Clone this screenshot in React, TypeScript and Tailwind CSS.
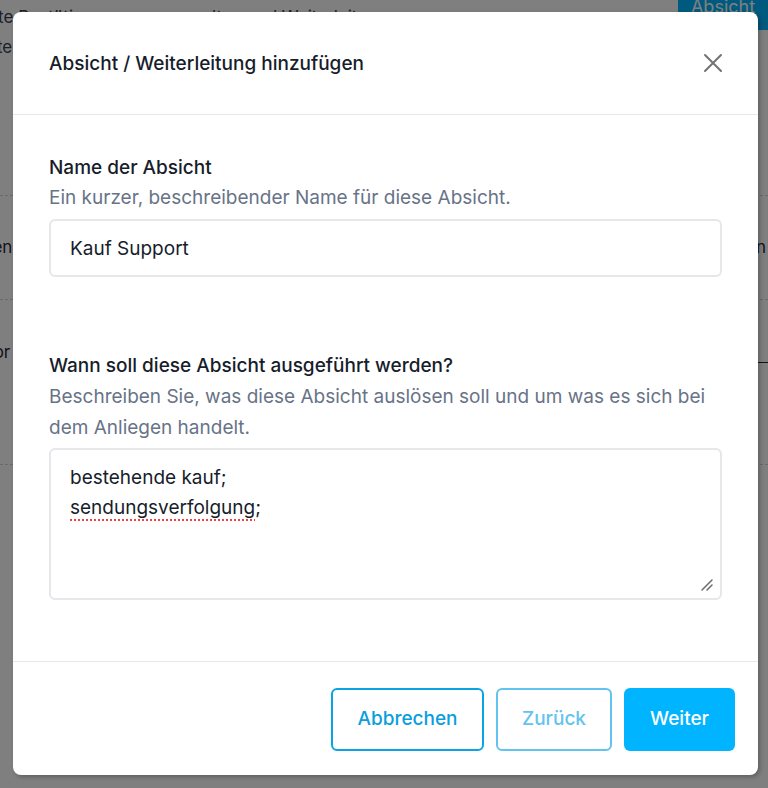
const font = { fontFamily: '"Inter", "Liberation Sans", sans-serif' };

function BackgroundPage() {
  return (
    <div className="h-full bg-white text-[17px] text-[#1f2937]">
      <div className="flex items-start justify-between">
        <div className="ml-[-12px] pt-[2px] leading-[30px] text-[#374151]">
          <p>ute Bestätigungen zu verwalten und Weiterleitungen</p>
          <p>ste</p>
        </div>
        <div className="flex h-[30px] w-[90px] items-end justify-center rounded-bl-md bg-[#00b4ff] pb-[14px] text-[18px] leading-none text-white">Absicht</div>
      </div>
      <div className="mt-[133px]">
        <div className="flex h-[105px] items-center justify-between border-y border-dashed border-gray-300 bg-white">
          <span className="ml-[-32px]">Offen</span>
          <span className="mr-[2px]">Offen</span>
        </div>
        <div className="flex h-[165px] items-start justify-between border-b border-dashed border-gray-300 pt-[40px]">
          <span className="ml-[-16px]">Tor</span>
          <span className="mr-[-14px] mt-[22px] h-px w-[24px] bg-gray-800" />
        </div>
      </div>
    </div>
  );
}

export default function App() {
  return (
    <div className="relative h-[788px] w-[768px] overflow-hidden" style={font}>
      <BackgroundPage />
      <div className="absolute inset-0 bg-black/50 pl-[13px] pt-[12px]">
        <div className="flex h-[763px] w-[745px] flex-col rounded-lg bg-white shadow-[2px_2px_4px_rgba(0,0,0,0.25)]">
          <div className="flex h-[103px] shrink-0 items-center justify-between border-b border-[#e5e7eb] pl-[36px] pr-[35px]">
            <h2 className="pt-[2px] text-[19px] font-medium text-[#171d2b]">Absicht / Weiterleitung hinzufügen</h2>
            <button className="text-[#737373]" aria-label="Schließen">
              <svg width="20" height="20" viewBox="0 0 20 20" fill="none" stroke="currentColor" strokeWidth="2" strokeLinecap="round">
                <path d="M2 2 18 18M18 2 2 18" />
              </svg>
            </button>
          </div>
          <div className="flex-1 px-[36px] pt-[38px] text-[19px] leading-[30px]">
            <label className="block font-medium text-[#171d2b]">Name der Absicht</label>
            <p className="text-[#687387]">Ein kurzer, beschreibender Name für diese Absicht.</p>
            <div className="mt-[6px] flex h-[58px] items-center rounded-md border-2 border-[#e5e7eb] px-[19px] pt-[2px] text-[#171d2b]">Kauf Support</div>
            <label className="mt-[74px] block font-medium text-[#171d2b]">Wann soll diese Absicht ausgeführt werden?</label>
            <p className="leading-[31px] text-[#687387]">Beschreiben Sie, was diese Absicht auslösen soll und um was es sich bei dem Anliegen handelt.</p>
            <div className="relative mt-[5px] h-[152px] rounded-md border-2 border-[#e5e7eb] px-[19px] pt-[13px] text-[#171d2b]">
              <p>bestehende kauf;</p>
              <p>
                <span className="underline decoration-[#ef4444] decoration-dotted decoration-2 underline-offset-[5px]">sendungsverfolgung</span>;
              </p>
              <svg className="absolute bottom-[6px] right-[6px]" width="14" height="14" viewBox="0 0 14 14" stroke="#6b6b6b" strokeWidth="1.5" strokeLinecap="round">
                <path d="M2 12 12 2M7 12 12 7" />
              </svg>
            </div>
          </div>
          <div className="flex shrink-0 justify-end gap-[12px] border-t border-[#e5e7eb] pb-[24px] pr-[23px] pt-[26px] text-[19px] font-medium">
            <button className="h-[63px] w-[153px] rounded-md border-2 border-[#0aa3e3] text-[#0a9edc]">Abbrechen</button>
            <button className="h-[63px] w-[116px] rounded-md border-2 border-[#62c3ee] text-[#62c3ee]">Zurück</button>
            <button className="h-[63px] w-[111px] rounded-md bg-[#00b4ff] text-white">Weiter</button>
          </div>
        </div>
      </div>
    </div>
  );
}
